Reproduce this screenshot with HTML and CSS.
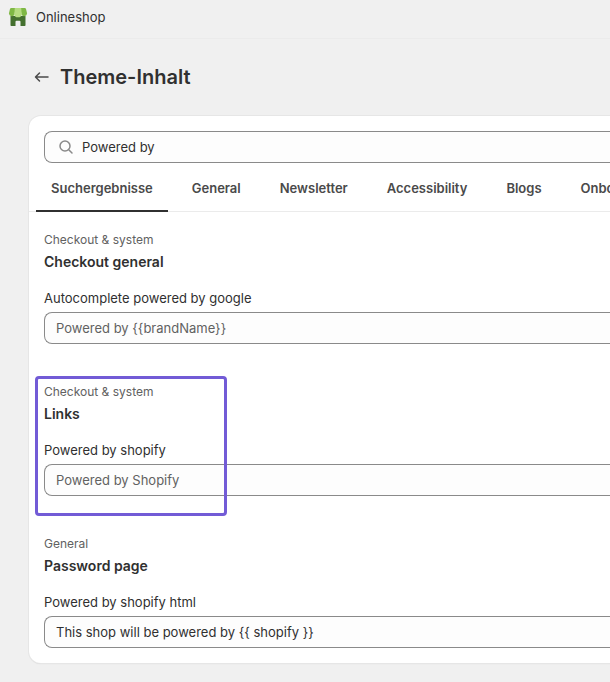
FILE: index.html
```
<!DOCTYPE html>
<html lang="de">
<head>
<meta charset="utf-8">
<meta name="viewport" content="width=device-width, initial-scale=1">
<title>Theme-Inhalt</title>
<link rel="stylesheet" href="styles.css">
</head>
<body>
<header class="topbar">
  <svg class="shop-icon" viewBox="0 0 20 20" aria-hidden="true">
    <path fill="#44702f" d="M2.500 9h15v9.200a.8.8 0 0 1-.8.8H12.500v-4.300a1 1 0 0 0-1-1H8.500a1 1 0 0 0-1 1V19H3.300a.8.8 0 0 1-.8-.8z"/>
    <path fill="#7fb845" d="M3.400 1h4.100L6.600 7.500a3 3 0 0 1-5.700-.9L1.900 2.200A1.500 1.500 0 0 1 3.400 1zM16.600 1h-4.100l.9 6.500a3 3 0 0 0 5.700-.9l-1-4.400A1.500 1.500 0 0 0 16.600 1z"/>
    <path fill="#b5dc80" d="M6.800 1h6.400l.5 6.200a3.700 3.100 0 0 1-7.400 0z"/>
  </svg>
  <span>Onlineshop</span>
</header>
<main class="page">
  <div class="page-head">
    <a class="back" href="#" aria-label="Zurück">
      <svg viewBox="0 0 20 20" aria-hidden="true"><path d="M16 10H4M7.500 6 3.500 10l4 4"/></svg>
    </a>
    <h1>Theme-Inhalt</h1>
  </div>
  <div class="card">
    <div class="search">
      <svg viewBox="0 0 20 20" aria-hidden="true"><circle cx="9" cy="9" r="5"/><path d="m13 13 3 3"/></svg>
      <input class="input search-input" type="text" aria-label="Suchen" value="Powered by">
    </div>
    <nav class="tabs">
      <button class="tab active" type="button">Suchergebnisse</button>
      <button class="tab" type="button">General</button>
      <button class="tab" type="button">Newsletter</button>
      <button class="tab" type="button">Accessibility</button>
      <button class="tab" type="button">Blogs</button>
      <button class="tab" type="button">Onboarding</button>
    </nav>
    <div class="results">
      <section class="result">
        <p class="group">Checkout &amp; system</p>
        <h2>Checkout general</h2>
        <label for="google">Autocomplete powered by google</label>
        <input class="input" id="google" type="text" placeholder="Powered by {{brandName}}">
      </section>
      <section class="result marked">
        <p class="group">Checkout &amp; system</p>
        <h2>Links</h2>
        <label for="shopify">Powered by shopify</label>
        <input class="input" id="shopify" type="text" placeholder="Powered by Shopify">
      </section>
      <section class="result">
        <p class="group">General</p>
        <h2>Password page</h2>
        <label for="html">Powered by shopify html</label>
        <input class="input" id="html" type="text" value="This shop will be powered by {{ shopify }}">
      </section>
    </div>
  </div>
</main>
</body>
</html>
```
FILE: styles.css
```
*,
*::after {
  box-sizing: border-box;
}

body {
  margin: 0;
  background: #f0f0f0;
  color: #303030;
  font: 13px/20px Inter, "Liberation Sans", sans-serif;
}

h1, h2, p {
  margin: 0;
}

.topbar {
  display: flex;
  align-items: center;
  gap: 8px;
  padding: 7px 8px 11px;
  border-bottom: 1px solid #ebebeb;
}

.shop-icon {
  width: 20px;
  height: 20px;
}

.page {
  padding: 24px 0 18px 29px;
}

.page-head {
  display: flex;
  align-items: center;
  gap: 8px;
  padding-left: 3px;
  margin-bottom: 25px;
}

.back {
  display: flex;
}

.back svg {
  width: 20px;
  height: 20px;
  fill: none;
  stroke: #4a4a4a;
  stroke-width: 1.5;
  stroke-linecap: round;
  stroke-linejoin: round;
}

h1 {
  font-size: 20px;
  line-height: 28px;
  font-weight: 600;
}

/* The card and its fields are flush with the right edge of the window. */
.card {
  background: #fff;
  border-radius: 12px 0 0 12px;
  box-shadow: 0 0 0 1px #e6e6e6, 0 1px 1px #d0d0d0;
  clip-path: inset(-2px 0 -3px -2px);
  padding: 15px 0;
}

.search {
  position: relative;
  padding-left: 15px;
}

.search svg {
  position: absolute;
  left: 27px;
  top: 6px;
  width: 20px;
  height: 20px;
  fill: none;
  stroke: #8a8a8a;
  stroke-width: 1.5;
  stroke-linecap: round;
}

.input {
  display: block;
  width: 100%;
  height: 32px;
  padding: 0 11px;
  border: 1px solid #8a8a8a;
  border-right: 0;
  border-radius: 8px 0 0 8px;
  background: #fdfdfd;
  color: #303030;
  font: inherit;
}

.input::placeholder {
  color: #616161;
  opacity: 1;
}

.search-input {
  padding-left: 37px;
}

.tabs {
  display: flex;
  gap: 9px;
  padding-left: 7px;
  overflow: hidden;
  box-shadow: inset 0 -1px #ebebeb;
}

.tab {
  flex: none;
  padding: 15px 15px 12px;
  border: 0;
  border-bottom: 2px solid transparent;
  background: none;
  color: #4a4a4a;
  font: inherit;
  font-weight: 600;
}

.tab.active {
  border-bottom-color: #303030;
}

.results {
  display: grid;
  gap: 40px;
  padding: 20px 0 0 15px;
}

.result {
  position: relative;
}

.group {
  color: #616161;
  font-size: 12px;
  line-height: 16px;
  margin-bottom: 4px;
}

h2 {
  font-size: 14px;
  line-height: 20px;
  font-weight: 600;
  margin-bottom: 16px;
}

label {
  display: block;
  margin-bottom: 4px;
}

.marked::after {
  content: "";
  position: absolute;
  left: -9px;
  top: -8px;
  width: 192px;
  height: 140px;
  border: 3px solid #725bd6;
  border-radius: 4px;
  pointer-events: none;
}
```
